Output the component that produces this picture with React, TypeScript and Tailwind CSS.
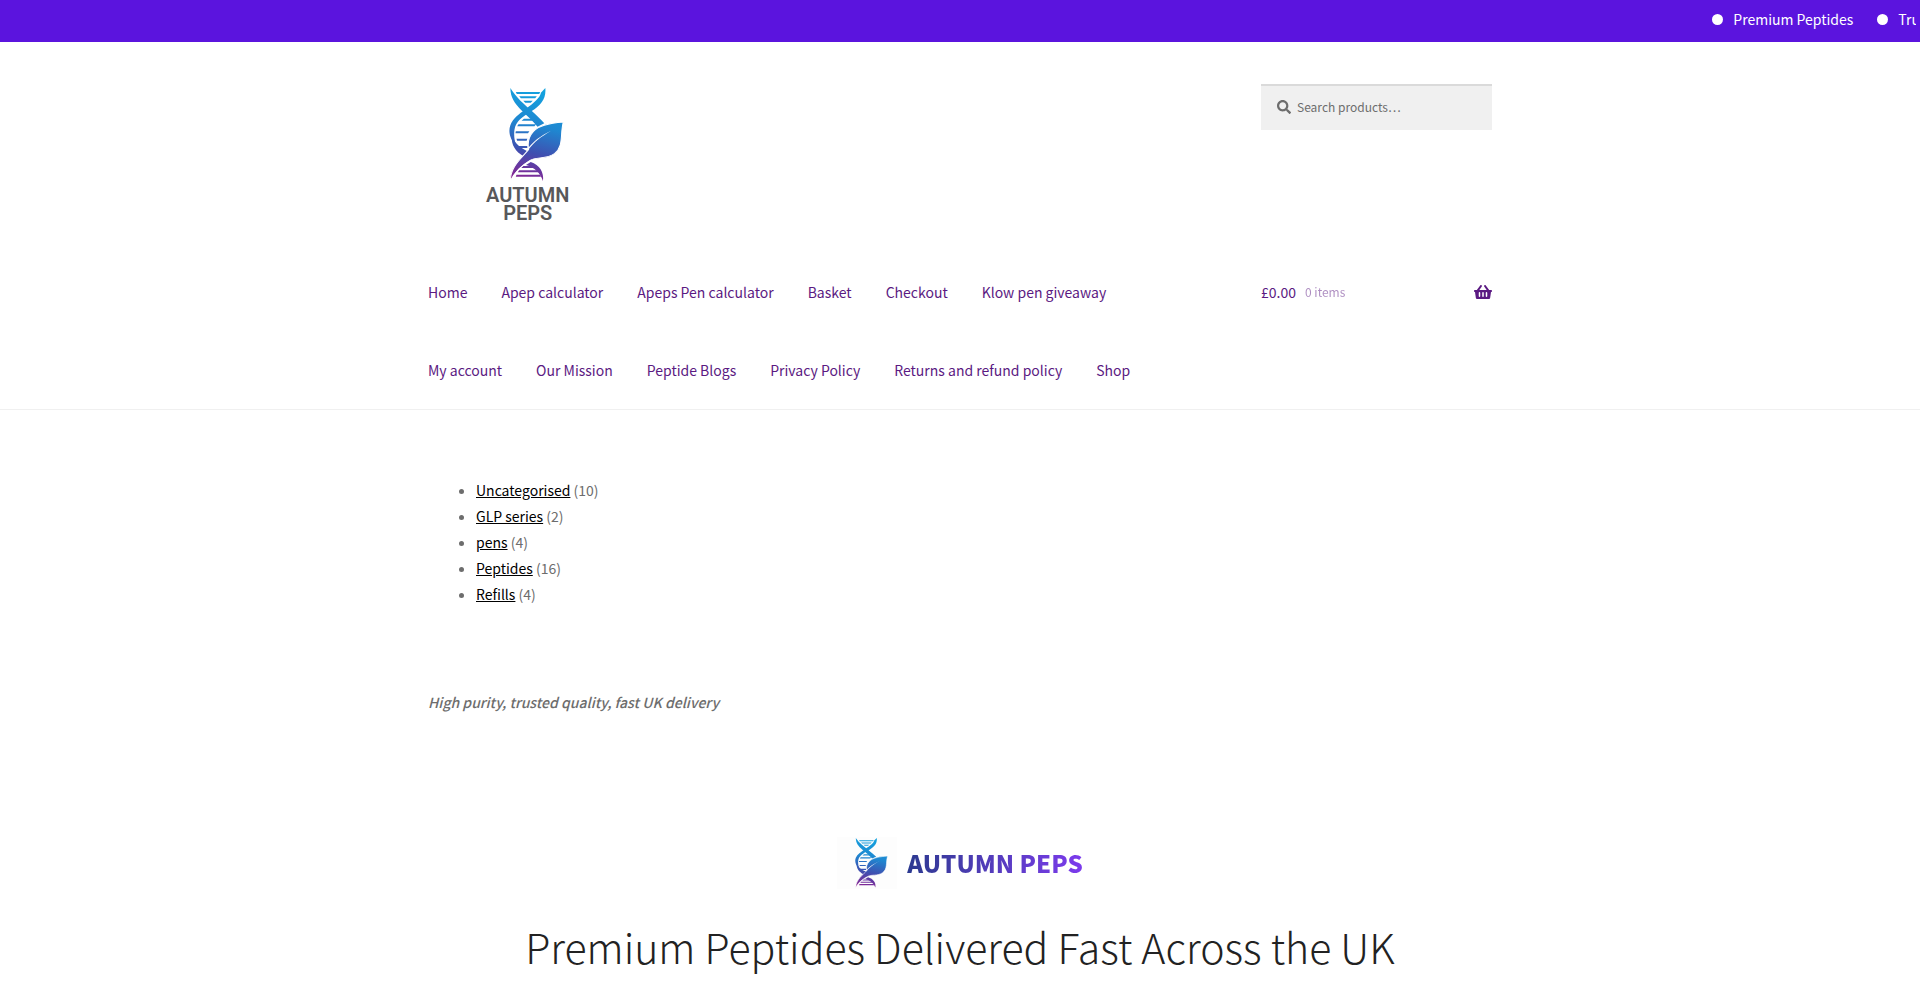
import React from "react";

type NavItem = { label: string };
type Category = { name: string; count: number };

const primary: NavItem[] = [
  "Home", "Apep calculator", "Apeps Pen calculator", "Basket", "Checkout", "Klow pen giveaway",
  "My account", "Our Mission", "Peptide Blogs", "Privacy Policy", "Returns and refund policy", "Shop",
].map((label) => ({ label }));

const categories: Category[] = [
  { name: "Uncategorised", count: 10 },
  { name: "GLP series", count: 2 },
  { name: "pens", count: 4 },
  { name: "Peptides", count: 16 },
  { name: "Refills", count: 4 },
];

function Helix({ id, className }: { id: string; className: string }) {
  return (
    <svg viewBox="-4 0 162 282" preserveAspectRatio="none" className={className} aria-hidden="true">
      <defs>
        <linearGradient id={id} gradientUnits="userSpaceOnUse" x1="100" y1="0" x2="30" y2="282">
          <stop offset="0" stopColor="#12a5e0" />
          <stop offset="0.4" stopColor="#1f86d0" />
          <stop offset="0.68" stopColor="#3f4fb0" />
          <stop offset="1" stopColor="#8f1f90" />
        </linearGradient>
      </defs>
      <g fill={`url(#${id})`}>
        <path d="M16 12h72l-3 6H19zM26 25h52l-5 6H31zM38 38h28l-6 6H44z" />
        <path d="M40 92h32l8 6H33zM24 109h52l-5 6H20zM16 130h40l-4 6H15zM18 152h32l-2 6H20zM20 174h30v6H24zM34 190h18v6H40z" />
        <path d="M38 234h32l6 6H32zM26 247h54l4 6H22zM18 260h70l2 6H16z" />
        <path d="M103 0C106 32 90 52 62 70 36 86 16 100 12 126c-2 16 0 30 4 42C2 160-8 134 0 112 8 90 24 80 46 62 70 44 88 28 90 14z" />
        <path d="M0 0c18 30 40 48 64 70 12 11 24 22 36 36l-20 10C66 98 50 84 34 68 12 46 0 28 0 0z" />
        <path d="M4 142c6 20 20 34 46 48l-12 14C16 192 2 172 4 142z" />
      </g>
      <path
        d="M156 102c-36 3-70 8-88 28-14 16-18 34-14 54C36 208 0 234 0 279c14-30 32-46 58-62 18-12 48-2 72-20 28-22 16-58 26-95z"
        fill={`url(#${id})`}
        stroke="#fff"
        strokeWidth="3"
      />
      <path d="M50 184c16-24 38-40 70-56-30 18-50 34-66 56z" fill="#fff" />
      <path d="M60 222c26 8 40 32 36 57-8-24-24-40-50-48z" fill={`url(#${id})`} />
    </svg>
  );
}

export default function App() {
  return (
    <div className="min-h-screen overflow-x-hidden bg-white font-['Noto_Sans_CJK_SC',sans-serif] text-sm leading-[26px] text-[#6d6d6d]">
      <div className="bg-[#5b14de] pr-1 text-white">
        <div className="flex h-[42px] justify-end overflow-hidden">
          <ul className="-mr-[82px] flex items-center gap-6 whitespace-nowrap pb-1">
            {["Premium Peptides", "Trusted Quality"].map((t) => (
              <li key={t} className="flex items-center gap-[10px]">
                <span className="size-[11px] rounded-full bg-white" />
                {t}
              </li>
            ))}
          </ul>
        </div>
      </div>

      <header className="border-b border-[#f0f0f0] pt-[42px]">
        <div className="mx-auto max-w-[1064px]">
          <div className="flex h-[169px] items-start justify-between">
            <a href="#" aria-label="Autumn Peps" className="ml-[58px] flex flex-col items-center pt-1 font-['Roboto',sans-serif] text-xl font-semibold leading-[18px] text-[#58585a]">
              <Helix id="logo-main" className="mb-1 ml-[18px] h-[94px] w-[55px]" />
              <span>AUTUMN</span>
              <span>PEPS</span>
            </a>
            <form role="search" className="flex h-[46px] w-[231px] items-center gap-[6px] border-t-2 border-[#dadada] bg-[#f0f0f0] pb-[2px] pl-4">
              <svg viewBox="0 0 512 512" className="size-[14px] shrink-0" fill="#6d6d6d" aria-hidden="true">
                <path d="M505 442.700 405.300 343c-4.500-4.500-10.600-7-17-7H372c27.600-35.300 44-79.700 44-128C416 93.100 322.900 0 208 0S0 93.100 0 208s93.100 208 208 208c48.300 0 92.700-16.400 128-44v16.300c0 6.400 2.500 12.500 7 17l99.700 99.700c9.400 9.400 24.600 9.400 33.900 0l28.300-28.300c9.400-9.400 9.400-24.600.1-34zM208 336c-70.700 0-128-57.200-128-128 0-70.700 57.200-128 128-128 70.700 0 128 57.200 128 128 0 70.700-57.200 128-128 128z" />
              </svg>
              <input type="search" aria-label="Search products" placeholder="Search products…" className="w-full min-w-0 bg-transparent text-xs outline-none placeholder:text-[#6d6d6d]" />
            </form>
          </div>
          <div className="flex items-start justify-between text-[#5b1a82]">
            <nav className="w-[740px]">
              <ul className="flex flex-wrap gap-x-[34px]">
                {primary.map((n) => (
                  <li key={n.label}>
                    <a href="#" className="block py-[26px]">{n.label}</a>
                  </li>
                ))}
              </ul>
            </nav>
            <a href="#" className="flex w-[231px] items-center py-[26px]">
              <span>£0.00</span>
              <span className="ml-[9px] text-xs leading-[26px] opacity-50">0 items</span>
              <svg viewBox="0 0 576 512" className="ml-auto h-4 w-[18px]" fill="currentColor" aria-hidden="true">
                <path d="M576 216v16c0 13.300-10.700 24-24 24h-8l-26.100 182.800C514.500 462.400 494.300 480 470.400 480H105.600c-23.900 0-44.100-17.600-47.500-41.200L32 256h-8c-13.300 0-24-10.700-24-24v-16c0-13.300 10.700-24 24-24h67.300l106.800-146.800c10.400-14.300 30.400-17.500 44.700-7.100 14.300 10.400 17.500 30.400 7.100 44.700L170.500 192h235.100L326.100 82.800c-10.400-14.300-7.200-34.300 7.100-44.700 14.300-10.400 34.300-7.200 44.700 7.100L484.700 192H552c13.300 0 24 10.700 24 24zM312 392V280c0-13.300-10.700-24-24-24s-24 10.700-24 24v112c0 13.300 10.700 24 24 24s24-10.700 24-24zm112 0V280c0-13.300-10.700-24-24-24s-24 10.700-24 24v112c0 13.300 10.700 24 24 24s24-10.700 24-24zm-224 0V280c0-13.300-10.700-24-24-24s-24 10.700-24 24v112c0 13.300 10.700 24 24 24s24-10.700 24-24z" />
              </svg>
            </a>
          </div>
        </div>
      </header>

      <main className="mx-auto max-w-[1064px] pt-[67px]">
        <ul className="list-disc pl-12">
          {categories.map((c) => (
            <li key={c.name}>
              <a href="#" className="text-black underline">{c.name}</a> ({c.count})
            </li>
          ))}
        </ul>
        <p className="mt-[82px] font-medium italic">High purity, trusted quality, fast UK delivery</p>
        <section className="mt-[122px] flex flex-col items-center">
          <div className="flex items-center gap-[10px]">
            <span className="flex h-[52px] w-[60px] items-center justify-center bg-[#fdfdfd] pl-2">
              <Helix id="logo-hero" className="h-[50px] w-[33px]" />
            </span>
            <span className="bg-linear-to-r from-[#2b3990] to-[#7c3aed] bg-clip-text text-2xl leading-[26px] font-black text-transparent">AUTUMN PEPS</span>
          </div>
          <h1 className="mt-[21px] text-center text-[41px] font-light leading-[72px] text-[#222]">Premium Peptides Delivered Fast Across the UK</h1>
        </section>
      </main>
    </div>
  );
}
